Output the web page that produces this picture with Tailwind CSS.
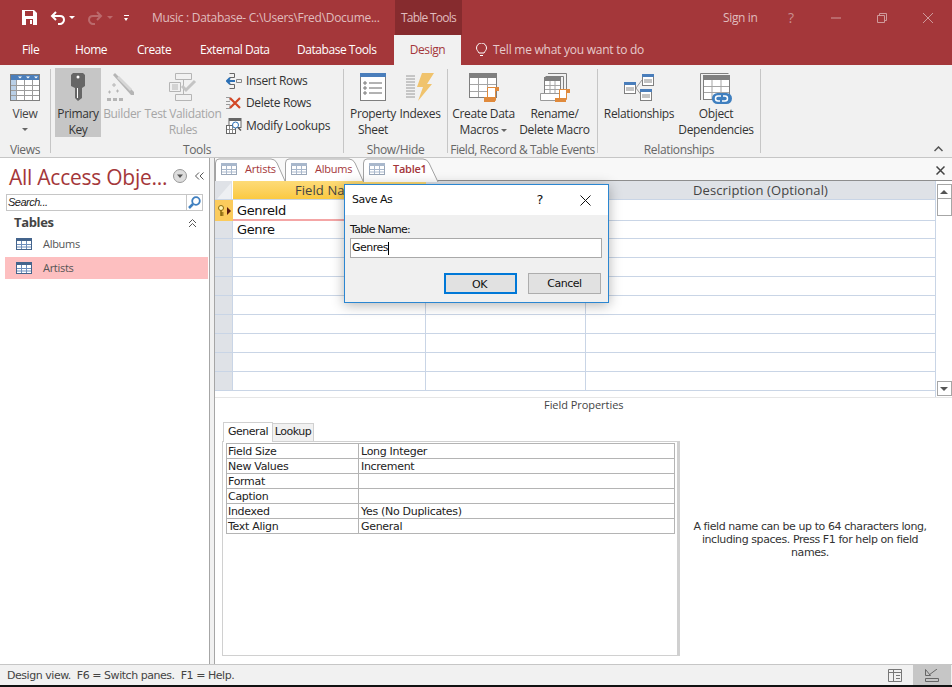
<!DOCTYPE html>
<html>
<head>
<meta charset="utf-8">
<script src="https://cdn.jsdelivr.net/npm/@tailwindcss/browser@4"></script>
</head>
<body class="font-['Open_Sans',sans-serif] text-[12px] tracking-[-0.35px] text-[#444]">
<div class="relative w-[952px] h-[687px] overflow-hidden bg-white flex flex-col">

  <!-- Title bar -->
  <div class="h-[35px] bg-[#a4373a] flex items-center text-[#e0bdbe] shrink-0">
    <svg class="ml-[22px] w-[15px] h-[15px]" viewBox="0 0 15 15"><path fill="#fff" d="M0 0h12l3 3v12H0z"/><path fill="#a4373a" d="M3 1h8v5H3zM4 9h7v6H4z"/><path fill="#fff" d="M8 10h2v4H8z"/></svg>
    <svg class="ml-[13px] w-[16px] h-[14px]" viewBox="0 0 16 14" fill="none" stroke="#fff" stroke-width="2"><path d="M6 1 2 5l4 4M2 5h8c3 0 4 2 4 4s-2 4-4 4H8"/></svg>
    <span class="ml-[3px] w-0 h-0 border-x-[3px] border-x-transparent border-t-[3px] border-t-white"></span>
    <svg class="ml-[12px] w-[16px] h-[14px]" viewBox="0 0 16 14" fill="none" stroke="#bb6a6c" stroke-width="2"><path d="m10 1 4 4-4 4M14 5H6C3 5 2 7 2 9s2 4 4 4h2"/></svg>
    <span class="ml-[4px] w-0 h-0 border-x-[3px] border-x-transparent border-t-[3px] border-t-[#bb6a6c]"></span>
    <span class="ml-[11px] w-[5px] flex flex-col gap-[2px]"><span class="h-px bg-white"></span><span class="w-0 h-0 border-x-[2.5px] border-x-transparent border-t-[3px] border-t-white"></span></span>
    <span class="ml-[23px] w-[231px] whitespace-nowrap tracking-[-0.28px]">Music : Database- C:\Users\Fred\Docume...</span>
    <span class="ml-[12px] w-[67px] h-full bg-[#862b2e] flex items-center justify-center tracking-[-0.75px]">Table Tools</span>
    <span class="ml-[261px] w-[36px]">Sign in</span>
    <span class="ml-[29px] text-[14px] text-[#c98f90]">?</span>
    <svg class="ml-[37px] w-[10px] h-[10px]" viewBox="0 0 10 10"><path stroke="#cf9a9b" d="M0 5h10"/></svg>
    <svg class="ml-[36px] w-[10px] h-[10px]" viewBox="0 0 10 10" fill="none" stroke="#cf9a9b"><path d="M.5 2.500h7v7h-7zM2.500 2.500v-2h7v7h-2"/></svg>
    <svg class="ml-[36px] w-[10px] h-[10px]" viewBox="0 0 10 10" stroke="#cf9a9b"><path d="m0 0 10 10M10 0 0 10"/></svg>
  </div>

  <!-- Ribbon tabs -->
  <div class="h-[30px] bg-[#a4373a] flex items-center text-white shrink-0 tracking-[-0.45px]">
    <span class="w-[75px] pl-[22px]">File</span>
    <span class="w-[62px]">Home</span>
    <span class="w-[63px]">Create</span>
    <span class="w-[97px]">External Data</span>
    <span class="w-[97px]">Database Tools</span>
    <span class="w-[67px] h-full bg-[#f1f1f1] text-[#a4373a] flex items-center justify-center">Design</span>
    <svg class="ml-[15px] w-[11px] h-[14px]" viewBox="0 0 11 14" fill="none" stroke="#fff"><path d="M3 10C2 8 .5 7 .5 5a5 5 0 0 1 10 0c0 2-1.500 3-2.500 5zM4 12.500h3"/></svg>
    <span class="ml-[6px] text-[#e6cbcc] tracking-[-0.25px]">Tell me what you want to do</span>
  </div>

  <!-- Ribbon -->
  <div class="h-[93px] bg-[#f1f1f1] border-b border-[#c6c6c6] flex shrink-0">

    <!-- Views -->
    <div class="w-[51px] flex flex-col border-r border-[#c6c6c6] my-[4px] shrink-0">
      <div class="h-[69px] shrink-0 -mt-px flex justify-center">
        <div class="w-[44px] pt-[6px] flex flex-col items-center">
          <div class="h-[32px] shrink-0">
            <svg class="w-[30px] h-[27px]" viewBox="0 0 30 27"><rect x=".5" y=".5" width="29" height="26" fill="#fff" stroke="#808080"/><rect x="1" y="1" width="28" height="5" fill="#4a7ebb"/><rect x="1" y="6" width="5" height="20" fill="#b9cfe6"/><path stroke="#9b9b9b" d="M6.500 6v20M14.500 6v20M22.500 6v20M1 11.500h28M1 16.500h28M1 21.500h28"/><path fill="#fff" d="M8 2.500h4l-2 2zM16 2.500h4l-2 2zM24 2.500h4l-2 2z"/></svg>
          </div>
          <span class="leading-4">View</span>
          <span class="mt-[6px] w-0 h-0 border-x-[3px] border-x-transparent border-t-[3px] border-t-[#666]"></span>
        </div>
      </div>
      <div class="text-center text-[#666] mt-[5px] leading-4">Views</div>
    </div>

    <!-- Tools -->
    <div class="w-[293px] flex flex-col border-r border-[#c6c6c6] my-[4px] shrink-0">
      <div class="h-[69px] shrink-0 -mt-px flex">
        <div class="ml-[4px] w-[46px] pt-[5px] flex flex-col items-center bg-[#c6c6c6] text-[#333]">
          <div class="h-[33px] shrink-0">
            <svg class="w-[14px] h-[28px]" viewBox="0 0 14 28"><path fill="#666" d="M2 0h10l2 2v11l-3 2v10l-4 3-3-3V15l-4-2V2z"/><circle cx="7" cy="4" r="1.500" fill="#fff"/><path stroke="#fff" d="M6.500 15v10"/></svg>
          </div>
          <span class="leading-4 text-center">Primary<br>Key</span>
        </div>
        <div class="ml-[2px] w-[38px] pt-[5px] flex flex-col items-center text-[#a6a6a6]">
          <div class="h-[33px] shrink-0 ml-[-2px]">
            <svg class="w-[30px] h-[28px]" viewBox="0 0 30 28" fill="#b5b5b5"><path d="m7 2 2-2 19 19v3h-3z"/><path fill="#d6d6d6" d="m11 5 2-2 13 13-2 2z"/><path d="M1 25h4v3H1zM7 25h4v3H7zM13 25h4v3h-4z"/><path stroke="#b5b5b5" fill="none" d="M6 12h4M8 10v4M2 19h3M3.500 17.500v3M10 18h3M11.500 16.500v3"/></svg>
          </div>
          <span class="leading-4">Builder</span>
        </div>
        <div class="ml-[4px] w-[76px] pt-[5px] flex flex-col items-center text-[#a6a6a6]">
          <div class="h-[33px] shrink-0">
            <svg class="w-[28px] h-[28px]" viewBox="0 0 28 28" fill="none" stroke="#b5b5b5"><path d="M6.500.5h16v6h-16zM6.500 21.500h16v6h-16zM14.500 6.500v15M.5 9.500h11v9H.500zM3 12h6M3 14h6M3 16h6"/><path stroke-width="3" stroke="#c4c4c4" d="m13 13 4 4 9-9"/></svg>
          </div>
          <span class="leading-4 text-center whitespace-nowrap">Test Validation<br>Rules</span>
        </div>
        <div class="ml-[5px] flex flex-col pt-[2px] text-[#333]">
          <div class="h-[23px] flex items-center">
            <svg class="w-[16px] h-[16px]" viewBox="0 0 16 16" fill="none"><path stroke="#666" d="M3.500.500h5v4h-5M3.500 11.500h5v4h-5"/><path stroke="#888" d="M10.500 6.500h5v3h-5z"/><path stroke="#2a6fb5" stroke-width="2" d="M1 8h8M4 5 1 8l3 3"/></svg>
            <span class="ml-[4px]">Insert Rows</span>
          </div>
          <div class="h-[23px] flex items-center">
            <svg class="w-[16px] h-[16px]" viewBox="0 0 16 16" fill="none"><path stroke="#999" d="M0 2.500h4M4 2.500v3M0 6.500h4M0 9.500h4v4H0"/><path stroke="#d24726" stroke-width="2.200" d="m4 3 10 10M14 3 4 13"/></svg>
            <span class="ml-[4px]">Delete Rows</span>
          </div>
          <div class="h-[23px] flex items-center">
            <svg class="w-[16px] h-[16px]" viewBox="0 0 16 16" fill="none"><rect x="3" y=".5" width="12" height="9" fill="#fff" stroke="#666"/><path fill="#666" d="M3 .5h12V3H3z"/><rect x=".5" y="7.500" width="9" height="8" fill="#fff" stroke="#666"/><path stroke="#888" d="M3.500 8v7M6.500 8v7M1 11.500h8"/><circle cx="9.500" cy="7" r="3" fill="#fff" stroke="#2a6fb5"/><path stroke="#555" stroke-width="1.500" d="m12 9.500 3 3"/></svg>
            <span class="ml-[4px]">Modify Lookups</span>
          </div>
        </div>
      </div>
      <div class="text-center text-[#666] mt-[5px] leading-4">Tools</div>
    </div>

    <!-- Show/Hide -->
    <div class="w-[104px] flex flex-col border-r border-[#c6c6c6] my-[4px] shrink-0">
      <div class="h-[69px] shrink-0 -mt-px flex">
        <div class="ml-[6px] w-[46px] pt-[5px] flex flex-col items-center text-[#333]">
          <div class="h-[33px] shrink-0">
            <svg class="w-[26px] h-[28px]" viewBox="0 0 26 28" fill="none"><rect x=".5" y=".5" width="25" height="27" fill="#fff" stroke="#7f7f7f"/><rect width="26" height="4" fill="#4a7ebb"/><path stroke="#666" d="M9 10h13M9 15h13M9 20h13"/><path stroke="#777" d="M4 9h2v2H4zM4 14h2v2H4zM4 19h2v2H4z"/></svg>
          </div>
          <span class="leading-4 text-center">Property<br>Sheet</span>
        </div>
        <div class="ml-[4px] w-[40px] pt-[5px] flex flex-col items-center text-[#333]">
          <div class="h-[33px] shrink-0">
            <svg class="w-[28px] h-[28px]" viewBox="0 0 28 28" fill="none"><path stroke="#9a9a9a" d="M0 3h9M0 6h9M0 9h9M0 12h9M0 15h9M0 18h9M0 21h9M0 24h9"/><path fill="#f0c36d" d="M16 0h12l-7 11h5L12 28l5-14h-6z"/></svg>
          </div>
          <span class="leading-4">Indexes</span>
        </div>
      </div>
      <div class="text-center text-[#666] mt-[5px] leading-4">Show/Hide</div>
    </div>

    <!-- Field, Record & Table Events -->
    <div class="w-[150px] flex flex-col border-r border-[#c6c6c6] my-[4px] shrink-0">
      <div class="h-[69px] shrink-0 -mt-px flex">
        <div class="ml-[5px] w-[61px] pt-[5px] flex flex-col items-center text-[#333]">
          <div class="h-[33px] shrink-0">
            <svg class="w-[30px] h-[30px]" viewBox="0 0 30 30" fill="none"><rect x=".5" y=".5" width="27" height="24" fill="#fff" stroke="#7f7f7f"/><rect width="28" height="5" fill="#7f7f7f"/><path stroke="#a5a5a5" d="M9.500 5v19M18.500 5v19M1 11.500h26M1 18.500h26"/><path fill="#fff" stroke="#e08a3c" d="M18.500 14.500h8v13h-8z"/><path fill="#e08a3c" d="M15 24h11v5H15zM26 14h4v4h-4z"/></svg>
          </div>
          <span class="leading-4 text-center whitespace-nowrap">Create Data<br>Macros<span class="inline-block ml-[3px] mb-[2px] w-0 h-0 border-x-[3px] border-x-transparent border-t-[3px] border-t-[#666]"></span></span>
        </div>
        <div class="ml-[5px] w-[71px] pt-[5px] flex flex-col items-center text-[#333]">
          <div class="h-[33px] shrink-0">
            <svg class="w-[30px] h-[30px]" viewBox="0 0 30 30" fill="none"><path stroke="#7f7f7f" d="M8 .5h18.500v22M5.500 3.500h18v18"/><rect x="4.500" y="4.500" width="16" height="16" fill="#fff" stroke="#7f7f7f"/><rect x="4" y="4" width="17" height="4" fill="#7f7f7f"/><path stroke="#a5a5a5" d="M10 8v12M15 8v12M5 12.500h15M5 16.500h15"/><path fill="#fff" stroke="#999" d="M.5 20.500h19v7H.500z"/><path fill="#fff" stroke="#e08a3c" d="M19.500 16.500h7v10h-7z"/><path fill="#e08a3c" d="M15 25h11v4H15zM26 16h4v4h-4z"/></svg>
          </div>
          <span class="leading-4 text-center whitespace-nowrap">Rename/<br>Delete Macro</span>
        </div>
      </div>
      <div class="text-center text-[#666] mt-[5px] leading-4 whitespace-nowrap tracking-[-0.45px]">Field, Record &amp; Table Events</div>
    </div>

    <!-- Relationships -->
    <div class="w-[163px] flex flex-col border-r border-[#c6c6c6] my-[4px] shrink-0">
      <div class="h-[69px] shrink-0 -mt-px flex">
        <div class="ml-[6px] w-[70px] pt-[6px] flex flex-col items-center text-[#333]">
          <div class="h-[32px] shrink-0">
            <svg class="w-[30px] h-[27px]" viewBox="0 0 30 27" fill="none"><path stroke="#999" d="m12 14 6-8M12 14l6 8"/><rect x=".5" y="8.500" width="11" height="11" fill="#fff" stroke="#7f7f7f"/><rect y="8" width="12" height="3" fill="#4a7ebb"/><path stroke="#888" d="M2 14h8M2 16h8"/><rect x="18.500" y=".5" width="11" height="11" fill="#fff" stroke="#7f7f7f"/><rect x="18" width="12" height="3" fill="#4a7ebb"/><path stroke="#888" d="M20 6h8M20 8h8"/><rect x="16.500" y="15.500" width="11" height="11" fill="#fff" stroke="#7f7f7f"/><rect x="16" y="15" width="12" height="3" fill="#4a7ebb"/><path stroke="#888" d="M18 21h8M18 23h8"/></svg>
          </div>
          <span class="leading-4">Relationships</span>
        </div>
        <div class="ml-[3px] w-[78px] pt-[5px] flex flex-col items-center text-[#333]">
          <div class="h-[33px] shrink-0">
            <svg class="w-[32px] h-[31px]" viewBox="0 0 32 31" fill="none"><path stroke="#7f7f7f" d="M.5 27V.5h28"/><rect x="3.500" y="2.500" width="26" height="24" fill="#fff" stroke="#7f7f7f"/><rect x="3" y="2" width="27" height="5" fill="#7f7f7f"/><path stroke="#a5a5a5" d="M12 7v19M21 7v19M4 13.500h25M4 19.500h25"/><rect x="12" y="20" width="20" height="11" rx="5.500" fill="#3f7fbf"/><path stroke="#fff" stroke-width="1.500" d="M21 23h-3a2.500 2.500 0 0 0 0 5h2M23 23h2a2.500 2.500 0 0 1 0 5h-3"/></svg>
          </div>
          <span class="leading-4 text-center">Object<br>Dependencies</span>
        </div>
      </div>
      <div class="text-center text-[#666] mt-[5px] leading-4">Relationships</div>
    </div>

    <!-- Collapse ribbon -->
    <div class="flex-1 flex items-end justify-end pr-[9px] pb-[5px]">
      <svg class="w-[9px] h-[6px]" viewBox="0 0 9 6" fill="none" stroke="#555" stroke-width="1.500"><path d="m.5 5 4-4 4 4"/></svg>
    </div>
  </div>

  <!-- Main -->
  <div class="flex flex-1 min-h-0">

    <!-- Navigation pane -->
    <div class="w-[210px] border-r border-[#a6a6a6] shrink-0 flex flex-col">
      <div class="h-[36px] shrink-0 flex items-center pl-[9px]">
        <span class="w-[161px] text-[21px] text-[#a4373a] tracking-[-0.25px] whitespace-nowrap pt-[4px]">All Access Obje...</span>
        <svg class="ml-[3px] w-[14px] h-[14px]" viewBox="0 0 14 14"><circle cx="7" cy="7" r="6.500" fill="#ddd" stroke="#999"/><path fill="#555" d="M4 5.500h6l-3 3.500z"/></svg>
        <svg class="ml-[8px] w-[9px] h-[8px]" viewBox="0 0 9 8" fill="none" stroke="#555"><path d="M4 .5.500 4 4 7.500M8.500.5 5 4l3.500 3.500"/></svg>
      </div>
      <div class="mx-[6px] h-[17px] shrink-0 border border-[#c6c6c6] flex items-center pl-[1px] text-[11px] italic text-[#222] font-['Liberation_Sans'] tracking-[-0.5px]">
        <span class="flex-1">Search...</span>
        <span class="w-[16px] h-full border-l border-[#c6c6c6] flex items-center justify-center">
          <svg class="w-[13px] h-[13px]" viewBox="0 0 13 13" fill="none" stroke="#3f7fbf" stroke-width="1.800"><circle cx="8" cy="5" r="3.800"/><path stroke-width="2.500" d="M5 8 1 12"/></svg>
        </span>
      </div>
      <div class="h-[22px] shrink-0 pl-[14px] pr-[12px] mt-[1px] flex items-center justify-between font-bold text-[13px] text-[#444]">
        <span>Tables</span>
        <svg class="w-[9px] h-[9px]" viewBox="0 0 9 9" fill="none" stroke="#555"><path d="m1 4 3.500-3.500L8 4M1 8l3.500-3.500L8 8"/></svg>
      </div>
      <div class="h-[23px] shrink-0 pb-[3px] ml-[5px] mr-[1px] flex items-center text-[11px] text-[#555] tracking-[-0.3px]">
        <svg class="ml-[11px] w-[16px] h-[12px]" viewBox="0 0 16 12"><rect x=".5" y=".5" width="15" height="11" fill="#fff" stroke="#44648c"/><rect width="16" height="3" fill="#44648c"/><path stroke="#6d8ebc" d="M5.500 3v8M10.500 3v8M1 6.500h14M1 9h14"/></svg>
        <span class="ml-[11px]">Albums</span>
      </div>
      <div class="h-[22px] shrink-0 ml-[5px] mr-[1px] bg-[#fdbfc0] flex items-center text-[11px] text-[#555] tracking-[-0.3px]">
        <svg class="ml-[11px] w-[16px] h-[12px]" viewBox="0 0 16 12"><rect x=".5" y=".5" width="15" height="11" fill="#fff" stroke="#44648c"/><rect width="16" height="3" fill="#44648c"/><path stroke="#6d8ebc" d="M5.500 3v8M10.500 3v8M1 6.500h14M1 9h14"/></svg>
        <span class="ml-[11px]">Artists</span>
      </div>
    </div>

    <!-- Splitter -->
    <div class="w-[4px] bg-[#f1f1f1] shrink-0"></div>

    <!-- Document -->
    <div class="flex-1 min-w-0 border-l border-[#a6a6a6] flex flex-col">

      <!-- Document tabs -->
      <div class="h-[23px] bg-[#f8f8f8] border-b border-[#8e8e8e] flex items-end relative shrink-0 text-[11px] text-[#a4373a] tracking-[-0.25px]">
        <div class="relative w-[70px] h-[22px] flex items-center">
          <svg class="absolute inset-0 w-[72px] h-[23px]" viewBox="0 0 72 23" fill="none"><path fill="#fff" stroke="#a3a3a3" d="M.5 23V5Q.5 1 4 1h52q4 0 6 4l8 18"/></svg>
          <svg class="relative ml-[6px] w-[16px] h-[12px]" viewBox="0 0 16 12"><rect x=".5" y=".5" width="15" height="11" fill="#fff" stroke="#9aa7b8"/><rect width="16" height="3" fill="#a9b8cc"/><path stroke="#a9b8cc" d="M5.500 3v8M10.500 3v8M1 6.500h14M1 9h14"/></svg>
          <span class="relative ml-[8px]">Artists</span>
        </div>
        <div class="relative w-[78px] h-[22px] flex items-center">
          <svg class="absolute inset-0 w-[80px] h-[23px]" viewBox="0 0 80 23" fill="none"><path fill="#fff" stroke="#a3a3a3" d="M.5 23V5Q.5 1 4 1h60q4 0 6 4l8 18"/></svg>
          <svg class="relative ml-[6px] w-[16px] h-[12px]" viewBox="0 0 16 12"><rect x=".5" y=".5" width="15" height="11" fill="#fff" stroke="#9aa7b8"/><rect width="16" height="3" fill="#a9b8cc"/><path stroke="#a9b8cc" d="M5.500 3v8M10.500 3v8M1 6.500h14M1 9h14"/></svg>
          <span class="relative ml-[8px]">Albums</span>
        </div>
        <div class="relative w-[76px] h-[22px] flex items-center">
          <svg class="absolute inset-0 w-[76px] h-[24px]" viewBox="0 0 76 24" fill="none"><path fill="#fff" stroke="#a3a3a3" d="M.5 24V5Q.5 1 4 1h56q4 0 6 4l9 19"/></svg>
          <svg class="relative ml-[6px] w-[16px] h-[12px]" viewBox="0 0 16 12"><rect x=".5" y=".5" width="15" height="11" fill="#fff" stroke="#9aa7b8"/><rect width="16" height="3" fill="#a9b8cc"/><path stroke="#a9b8cc" d="M5.500 3v8M10.500 3v8M1 6.500h14M1 9h14"/></svg>
          <span class="relative ml-[8px] font-semibold">Table1</span>
        </div>
        <svg class="absolute right-[7px] top-[8px] w-[9px] h-[9px]" viewBox="0 0 9 9" stroke="#444" stroke-width="1.500"><path d="m.5.5 8 8M8.500.5l-8 8"/></svg>
      </div>

      <!-- Table design grid -->
      <div class="h-[216px] flex shrink-0 overflow-hidden">
        <div class="flex-1 min-w-0 flex flex-col text-[13px] text-[#111] font-['DejaVu_Sans'] tracking-[-0.35px]">
          <div class="h-[19px] flex shrink-0 border-b border-[#c9d5e6] bg-[#dfe2e7] text-[#444] font-['Open_Sans'] tracking-[0.1px]">
            <div class="w-[18px] border-r border-white flex items-end"><svg class="w-[17px] h-[17px]" viewBox="0 0 17 17"><path fill="#eef0f3" d="M16 1v16H2z"/></svg></div>
            <div class="w-[193px] bg-gradient-to-b from-[#fddb77] to-[#fbc93f] flex items-center justify-center pt-[2px]">Field Name</div>
            <div class="w-[160px] flex items-center justify-center pt-[2px]">Data Type</div>
            <div class="flex-1 flex items-center justify-center pt-[2px]">Description (Optional)</div>
          </div>
          <div class="h-[21px] flex shrink-0">
            <div class="w-[18px] bg-[#fbcb5c] flex items-center justify-center gap-px">
              <svg class="w-[9px] h-[11px]" viewBox="0 0 9 11" fill="none"><circle cx="4" cy="3" r="2.500" fill="#fff3b0" stroke="#8a6a10"/><path stroke="#8a6a10" stroke-width="1.500" d="M4 5v6M4 8h2.500M4 10h2.500"/></svg>
              <span class="w-0 h-0 border-y-[4px] border-y-transparent border-l-[4px] border-l-[#5a1a10]"></span>
            </div>
            <div class="w-[193px] border-r border-r-[#c9d5e6] border-b-2 border-b-[#f4a6a6] pl-[4px] flex items-center pt-[2px]">GenreId</div>
            <div class="w-[160px] border-r border-b border-[#c9d5e6]"></div>
            <div class="flex-1 border-b border-[#c9d5e6]"></div>
          </div>
          <div class="h-[18px] flex shrink-0 border-b border-[#c9d5e6]">
            <div class="w-[18px] bg-[#dfe2e7] border-r border-[#c9d5e6]"></div>
            <div class="w-[193px] border-r border-[#c9d5e6] pl-[4px] flex items-center">Genre</div>
            <div class="w-[160px] border-r border-[#c9d5e6]"></div>
          </div>
          <div class="h-[19px] flex shrink-0 border-b border-[#c9d5e6]"><div class="w-[18px] bg-[#dfe2e7] border-r border-[#c9d5e6]"></div><div class="w-[193px] border-r border-[#c9d5e6]"></div><div class="w-[160px] border-r border-[#c9d5e6]"></div></div>
          <div class="h-[19px] flex shrink-0 border-b border-[#c9d5e6]"><div class="w-[18px] bg-[#dfe2e7] border-r border-[#c9d5e6]"></div><div class="w-[193px] border-r border-[#c9d5e6]"></div><div class="w-[160px] border-r border-[#c9d5e6]"></div></div>
          <div class="h-[19px] flex shrink-0 border-b border-[#c9d5e6]"><div class="w-[18px] bg-[#dfe2e7] border-r border-[#c9d5e6]"></div><div class="w-[193px] border-r border-[#c9d5e6]"></div><div class="w-[160px] border-r border-[#c9d5e6]"></div></div>
          <div class="h-[19px] flex shrink-0 border-b border-[#c9d5e6]"><div class="w-[18px] bg-[#dfe2e7] border-r border-[#c9d5e6]"></div><div class="w-[193px] border-r border-[#c9d5e6]"></div><div class="w-[160px] border-r border-[#c9d5e6]"></div></div>
          <div class="h-[19px] flex shrink-0 border-b border-[#c9d5e6]"><div class="w-[18px] bg-[#dfe2e7] border-r border-[#c9d5e6]"></div><div class="w-[193px] border-r border-[#c9d5e6]"></div><div class="w-[160px] border-r border-[#c9d5e6]"></div></div>
          <div class="h-[19px] flex shrink-0 border-b border-[#c9d5e6]"><div class="w-[18px] bg-[#dfe2e7] border-r border-[#c9d5e6]"></div><div class="w-[193px] border-r border-[#c9d5e6]"></div><div class="w-[160px] border-r border-[#c9d5e6]"></div></div>
          <div class="h-[19px] flex shrink-0 border-b border-[#c9d5e6]"><div class="w-[18px] bg-[#dfe2e7] border-r border-[#c9d5e6]"></div><div class="w-[193px] border-r border-[#c9d5e6]"></div><div class="w-[160px] border-r border-[#c9d5e6]"></div></div>
          <div class="h-[19px] flex shrink-0 border-b border-[#c9d5e6]"><div class="w-[18px] bg-[#dfe2e7] border-r border-[#c9d5e6]"></div><div class="w-[193px] border-r border-[#c9d5e6]"></div><div class="w-[160px] border-r border-[#c9d5e6]"></div></div>
        </div>
        <!-- Scrollbar -->
        <div class="w-[17px] border-l border-[#c9d5e6] shrink-0 flex flex-col items-center pt-[3px]">
          <div class="w-[15px] h-[15px] border border-[#a6a6a6] flex items-center justify-center"><span class="w-0 h-0 border-x-[4px] border-x-transparent border-b-[4px] border-b-[#555]"></span></div>
          <div class="w-[15px] h-[17px] border-x border-b border-[#a6a6a6]"></div>
          <div class="flex-1"></div>
          <div class="w-[15px] h-[15px] border border-[#a6a6a6] flex items-center justify-center mb-[1px]"><span class="w-0 h-0 border-x-[4px] border-x-transparent border-t-[4px] border-t-[#555]"></span></div>
        </div>
      </div>

      <!-- Field properties -->
      <div class="flex-1 min-h-0 flex flex-col border-t border-[#e6e6e6] text-[11px] font-['DejaVu_Sans'] tracking-[-0.3px] text-[#222]">
        <div class="h-[14px] shrink-0 pl-[329px] text-[#444] font-['Open_Sans'] tracking-[-0.05px] flex items-center whitespace-nowrap">Field Properties</div>
        <div class="mt-[9px] ml-[8px] flex items-end h-[20px] shrink-0 tracking-[-0.45px]">
          <div class="w-[50px] h-[20px] border border-b-0 border-[#d0d0d0] flex items-center justify-center bg-white z-10 -mb-px">General</div>
          <div class="w-[41px] h-[18px] border-t border-r border-[#d0d0d0] bg-[#f1f1f1] flex items-center justify-center">Lookup</div>
        </div>
        <div class="ml-[7px] w-[458px] h-[215px] shrink-0 border border-[#d0d0d0] border-r-[3px] pt-[1px] px-[3px] flex">
          <div class="w-[449px] h-[91px] shrink-0 border border-[#b4b4b4] flex flex-col leading-[16px]">
            <div class="h-[15px] flex border-b border-[#b4b4b4]"><div class="w-[132px] border-r border-[#b4b4b4] pl-[1px]">Field Size</div><div class="pl-[2px]">Long Integer</div></div>
            <div class="h-[15px] flex border-b border-[#b4b4b4]"><div class="w-[132px] border-r border-[#b4b4b4] pl-[1px]">New Values</div><div class="pl-[2px]">Increment</div></div>
            <div class="h-[15px] flex border-b border-[#b4b4b4]"><div class="w-[132px] border-r border-[#b4b4b4] pl-[1px]">Format</div><div></div></div>
            <div class="h-[15px] flex border-b border-[#b4b4b4]"><div class="w-[132px] border-r border-[#b4b4b4] pl-[1px]">Caption</div><div></div></div>
            <div class="h-[15px] flex border-b border-[#b4b4b4]"><div class="w-[132px] border-r border-[#b4b4b4] pl-[1px]">Indexed</div><div class="pl-[2px]">Yes (No Duplicates)</div></div>
            <div class="h-[15px] flex"><div class="w-[132px] border-r border-[#b4b4b4] pl-[1px]">Text Align</div><div class="pl-[2px]">General</div></div>
          </div>
        </div>
      </div>
    </div>
  </div>

  <!-- Help text beside the property table -->
  <div class="absolute left-[684px] top-[520px] w-[252px] text-center text-[11px] leading-[13px] text-[#333] font-['DejaVu_Sans'] tracking-[-0.42px]">A field name can be up to 64 characters long, including spaces. Press F1 for help on field names.</div>

  <!-- Status bar -->
  <div class="h-[21px] bg-[#f1f1f1] border-t border-[#c6c6c6] flex items-center shrink-0 text-[11px] text-[#444] font-['DejaVu_Sans'] tracking-[-0.46px]">
    <span class="ml-[7px] flex-1 whitespace-pre pt-[2px]">Design view.  F6 = Switch panes.  F1 = Help.</span>
    <svg class="w-[14px] h-[13px]" viewBox="0 0 14 13" fill="none" stroke="#777"><path d="M.5.5h13v12H.500zM5.500.5v12M.5 3.500h13M8 6.500h4M8 9.500h4"/></svg>
    <span class="ml-[11px] mr-px w-[38px] h-full bg-[#c6c6c6] flex items-center justify-center">
      <svg class="w-[14px] h-[13px]" viewBox="0 0 14 13" fill="none" stroke="#666"><path d="M.5.5v6l5 0zM4 6l8-6M.5 9.500h13v3H.500z"/></svg>
    </span>
  </div>
  <div class="h-[2px] bg-[#111] shrink-0"></div>

  <!-- Save As dialog -->
  <div class="absolute left-[344px] top-[184px] w-[265px] h-[119px] border border-[#2b86d1] bg-[#f0f0f0] shadow-[0_2px_12px_rgba(0,0,0,0.3)] text-[#111] text-[11px] font-['DejaVu_Sans'] tracking-[-0.5px] flex flex-col">
    <div class="h-[30px] bg-white flex items-center shrink-0">
      <span class="ml-[7px] flex-1 pt-px">Save As</span>
      <span class="text-[13px] mr-[37px]">?</span>
      <svg class="mr-[17px] w-[11px] h-[11px]" viewBox="0 0 11 11" stroke="#111"><path d="m.5.5 10 10M10.500.5l-10 10"/></svg>
    </div>
    <div class="pl-[5px] pt-[8px] leading-[13px] tracking-[-0.75px]">Table Name:</div>
    <div class="ml-[5px] mr-[6px] mt-[2px] h-[20px] bg-white border border-[#a9a9a9] flex items-center pl-[1px]"><span>Genres</span><span class="w-px h-[13px] bg-black"></span></div>
    <div class="mt-[15px] flex justify-end pr-[7px]">
      <button class="w-[73px] h-[21px] border-2 border-[#0078d7] bg-[#e1e1e1] pr-[2px] pt-[2px]">OK</button>
      <button class="ml-[11px] w-[73px] h-[21px] border border-[#adadad] bg-[#e1e1e1] pt-[2px]">Cancel</button>
    </div>
  </div>
</div>
</body>
</html>
